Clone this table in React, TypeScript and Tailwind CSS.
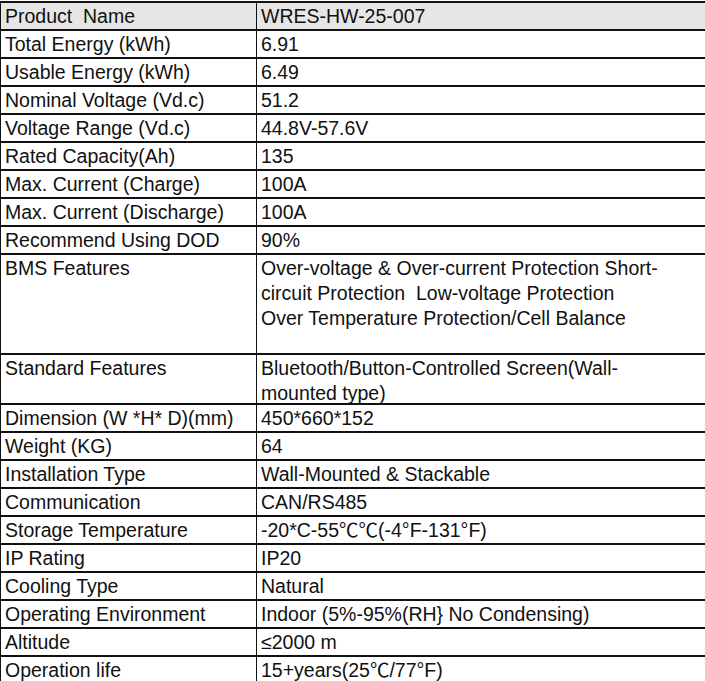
import React from "react";

type Row = { k: string; v: React.ReactNode; h?: string; header?: boolean };

const rows: Row[] = [
  { k: "Product  Name", v: "WRES-HW-25-007", header: true },
  { k: "Total Energy (kWh)", v: "6.91" },
  { k: "Usable Energy (kWh)", v: "6.49" },
  { k: "Nominal Voltage (Vd.c)", v: "51.2" },
  { k: "Voltage Range (Vd.c)", v: "44.8V-57.6V" },
  { k: "Rated Capacity(Ah)", v: "135" },
  { k: "Max. Current (Charge)", v: "100A" },
  { k: "Max. Current (Discharge)", v: "100A" },
  { k: "Recommend Using DOD", v: "90%" },
  {
    k: "BMS Features",
    v: (
      <>
        Over-voltage &amp; Over-current Protection Short-
        <br />
        circuit Protection&nbsp; Low-voltage Protection
        <br />
        Over Temperature Protection/Cell Balance
      </>
    ),
    h: "bms",
  },
  {
    k: "Standard Features",
    v: (
      <>
        Bluetooth/Button-Controlled Screen(Wall-
        <br />
        mounted type)
      </>
    ),
    h: "std",
  },
  { k: "Dimension (W *H* D)(mm)", v: "450*660*152" },
  { k: "Weight (KG)", v: "64" },
  { k: "Installation Type", v: "Wall-Mounted & Stackable" },
  { k: "Communication", v: "CAN/RS485" },
  { k: "Storage Temperature", v: "-20*C-55℃℃(-4°F-131°F)" },
  { k: "IP Rating", v: "IP20" },
  { k: "Cooling Type", v: "Natural" },
  { k: "Operating Environment", v: "Indoor (5%-95%(RH} No Condensing)" },
  { k: "Altitude", v: "≤2000 m" },
  { k: "Operation life", v: "15+years(25℃/77°F)" },
];

export default function App() {
  return (
    <div
      className="w-[705px] h-[681px] overflow-hidden bg-white pt-px text-[19.5px] text-[#111]"
      style={{ fontFamily: '"Liberation Sans", "Noto Sans CJK SC", sans-serif' }}
    >
      <div className="w-[760px] border-t-2 border-l border-[#111]">
        {rows.map((r, i) => {
          const hClass =
            r.h === "bms" ? "h-[100px]" : r.h === "std" ? "h-[50px]" : "h-[28px]";
          return (
            <div
              key={i}
              className={`grid grid-cols-[256px_1fr] border-b-2 border-[#111] ${hClass} ${
                r.header ? "bg-[#e6e6e6]" : "bg-white"
              }`}
            >
              <div className="border-r border-[#111] pl-[4px] leading-[25px] pt-px whitespace-pre">
                {r.k}
              </div>
              <div className="pl-[4px] leading-[25px] pt-px whitespace-nowrap">{r.v}</div>
            </div>
          );
        })}
      </div>
    </div>
  );
}
